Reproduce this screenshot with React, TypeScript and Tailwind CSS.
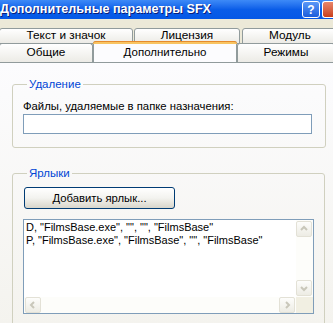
import React from 'react';

const font = { fontFamily: '"Liberation Sans", Tahoma, Arial, sans-serif' };

const Chevron = ({ dir }: { dir: 'up' | 'down' | 'left' | 'right' }) => {
    const paths: Record<string, string> = {
        up: 'M2 6 L5 3 L8 6',
        down: 'M2 4 L5 7 L8 4',
        left: 'M6 2 L3 5 L6 8',
        right: 'M4 2 L7 5 L4 8',
    };
    return (
        <svg width="10" height="10" viewBox="0 0 10 10">
            <path d={paths[dir]} fill="none" stroke="#C9C7BA" strokeWidth="2" />
        </svg>
    );
};

const ScrollBtn = ({ dir }: { dir: 'up' | 'down' | 'left' | 'right' }) => (
    <div className="shrink-0 w-[16px] h-[16px] rounded-[2px] border border-[#E3E1D6] bg-gradient-to-b from-[#FDFDFB] to-[#EDECE4] flex items-center justify-center">
        <Chevron dir={dir} />
    </div>
);

const Tab = ({ label, className }: { label: string; className: string }) => (
    <div className={`shrink-0 border border-[#919B9C] rounded-t-[3px] bg-gradient-to-b from-[#FFFFFF] to-[#ECEBE6] flex items-center justify-center text-[11.8px] text-black ${className}`}>
        {label}
    </div>
);

export default function App() {
    return (
        <div className="w-[333px] h-[323px] overflow-hidden bg-[#ECE9D8] flex flex-col" style={font}>
            {/* title bar */}
            <div className="h-[19px] shrink-0 bg-gradient-to-b from-[#3D8AF7] via-[#0A5DE8] to-[#0558E6] flex items-center justify-between">
                <span className="text-white font-bold text-[12.6px] [text-shadow:1px_1px_0_#0A1E7A]">Дополнительные параметры SFX</span>
                <div className="flex items-center gap-[2px]">
                    <div className="w-[18px] h-[17px] rounded-[3px] border border-white bg-gradient-to-b from-[#5A97F7] to-[#1C5DDB] flex items-center justify-center text-white font-bold text-[12px]">?</div>
                    <div className="w-[11px] h-[17px] rounded-l-[3px] border border-r-0 border-white bg-gradient-to-b from-[#E8866A] to-[#C83E1A]" />
                </div>
            </div>

            {/* tabs */}
            <div className="mt-[9px] flex h-[16px]">
                <Tab label="Текст и значок" className="w-[134px] h-[16px] -ml-[1px]" />
                <Tab label="Лицензия" className="w-[106px] h-[16px] ml-[1px]" />
                <Tab label="Модуль" className="w-[96px] h-[16px] ml-[2px]" />
            </div>
            <div className="flex h-[19px] -mt-[1px] relative z-10">
                <Tab label="Общие" className="w-[94px] h-[19px] -ml-[1px] border-b-0" />
                <div className="shrink-0 w-[144px] h-[21px] -mt-[2px] border border-b-0 border-[#919B9C] rounded-t-[3px] bg-[#FCFCFE] flex flex-col">
                    <div className="h-[3px] -mx-[1px] -mt-[1px] rounded-t-[3px] bg-[#F8C462] border-t border-[#E68B2C]" />
                    <div className="flex-1 flex items-center justify-center text-[11.5px] text-black pb-[1px]">Дополнительно</div>
                </div>
                <Tab label="Режимы" className="w-[98px] h-[19px] border-b-0" />
            </div>

            {/* panel */}
            <div className="flex-1 border-t border-[#919B9C] bg-gradient-to-b from-[#FCFCFE] to-[#F4F3EE] pl-[12px] pt-[14px]">
                <fieldset className="w-[313px] h-[71px] border border-[#D0D0BF] rounded-[3px] pl-[10px] pr-[13px] m-0">
                    <legend className="ml-[4px] px-[2px] text-[11.5px] leading-[14px] text-[#0046D5]">Удаление</legend>
                    <div className="text-[11.3px] text-black mt-[8px] leading-[14px]">Файлы, удаляемые в папке назначения:</div>
                    <div className="mt-[1px] h-[20px] w-[289px] border border-[#7F9DB9] bg-white" />
                </fieldset>

                <fieldset className="mt-[18px] w-[313px] h-[160px] border border-[#D0D0BF] rounded-[3px] pl-[10px] m-0">
                    <legend className="ml-[4px] px-[2px] text-[11.5px] leading-[14px] text-[#0046D5]">Ярлыки</legend>
                    <div className="mt-[7px] ml-[1px] w-[151px] h-[22px] rounded-[3px] border border-[#003C74] bg-gradient-to-b from-[#FFFFFF] via-[#F3F3EF] to-[#D9D6CB] flex items-center justify-center text-[11.3px] text-black">
                        Добавить ярлык...
                    </div>
                    <div className="mt-[10px] w-[291px] h-[95px] border border-[#7F9DB9] bg-white flex flex-col">
                        <div className="flex-1 flex min-h-0">
                            <div className="flex-1 min-w-0 overflow-hidden pl-[2px] pt-[1px] text-[11px] leading-[13px] text-black whitespace-pre">
                                <div>D, "FilmsBase.exe", "", "", "FilmsBase"</div>
                                <div>P, "FilmsBase.exe", "FilmsBase", "", "FilmsBase"</div>
                            </div>
                            <div className="shrink-0 w-[17px] bg-[#FDFDFA] flex flex-col justify-between py-[1px]">
                                <ScrollBtn dir="up" />
                                <ScrollBtn dir="down" />
                            </div>
                        </div>
                        <div className="shrink-0 h-[16px] flex">
                            <div className="flex-1 bg-[#FDFDFA] flex justify-between px-[1px]">
                                <ScrollBtn dir="left" />
                                <ScrollBtn dir="right" />
                            </div>
                            <div className="w-[17px] bg-[#F1EFE2]" />
                        </div>
                    </div>
                </fieldset>
            </div>
        </div>
    );
}
